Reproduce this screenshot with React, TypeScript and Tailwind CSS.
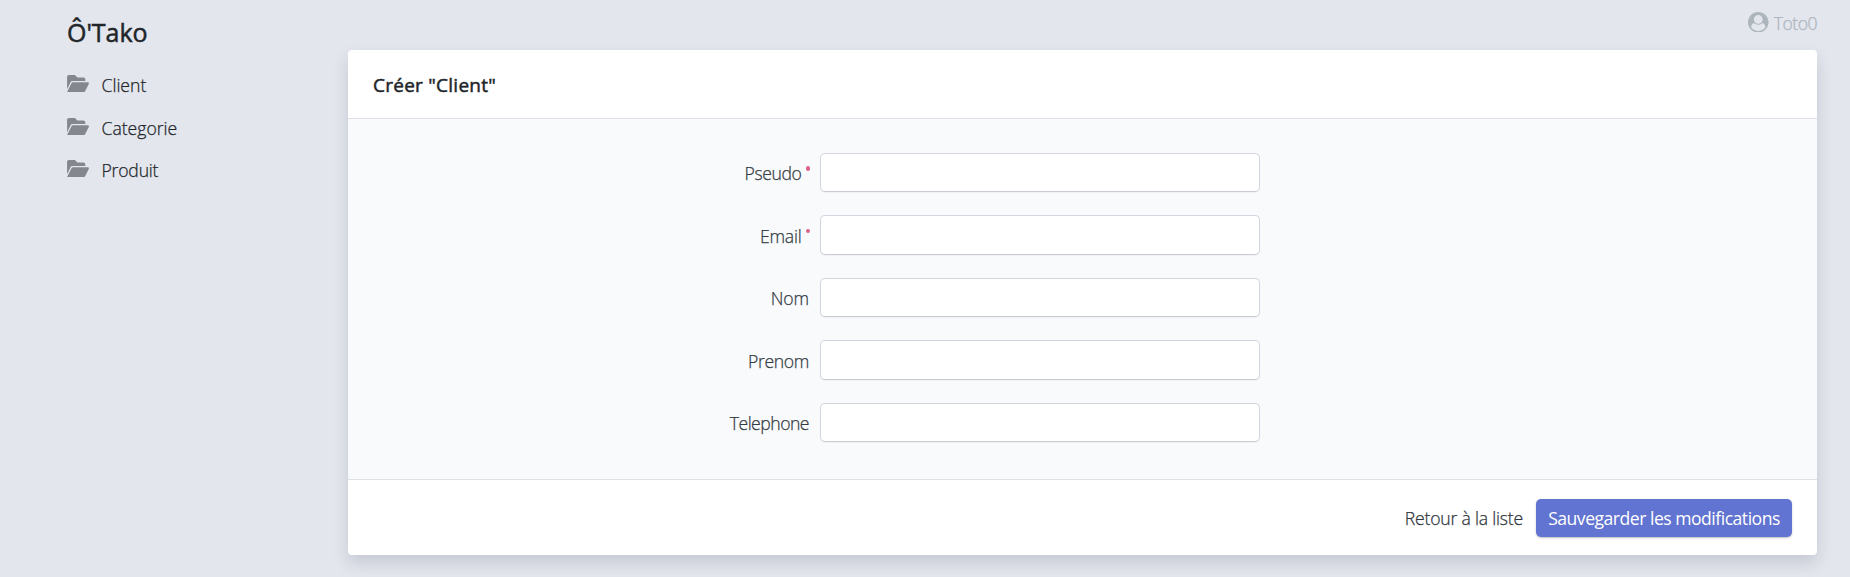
type Entry = { label: string; tracking: string };

const menu: Entry[] = [
  { label: "Client", tracking: "tracking-[0px]" },
  { label: "Categorie", tracking: "tracking-[0px]" },
  { label: "Produit", tracking: "tracking-[-0.2px]" },
];

const fields: (Entry & { required?: boolean })[] = [
  { label: "Pseudo", tracking: "tracking-[-0.4px]", required: true },
  { label: "Email", tracking: "tracking-[-0.2px]", required: true },
  { label: "Nom", tracking: "tracking-[-0.1px]" },
  { label: "Prenom", tracking: "tracking-[-0.35px]" },
  { label: "Telephone", tracking: "tracking-[-0.5px]" },
];

function FolderOpen() {
  return (
    <svg viewBox="0 32 576 448" fill="currentColor" className="mb-[3px] h-[17px] w-[22px] text-[#84888e]">
      <path d="M147.8 192H480V144C480 117.5 458.5 96 432 96h-160l-64-64h-160C21.49 32 0 53.49 0 80v328.4l90.54-181.1C101.4 205.6 123.4 192 147.8 192zM543.1 224H147.8C135.7 224 124.6 230.8 119.2 241.7L0 480h447.1c12.12 0 23.2-6.852 28.62-17.69l96-192C583.2 249 567.7 224 543.1 224z" />
    </svg>
  );
}

function UserCircle() {
  return (
    <svg viewBox="0 0 1792 1792" fill="currentColor" className="size-[20.5px]">
      <path d="M1523 1339q-22-155-87.5-257.5t-184.5-118.5q-67 74-159.5 115.5t-195.5 41.5-195.5-41.5-159.5-115.5q-119 16-184.5 118.5t-87.5 257.5q106 150 271 237.5t356 87.5 356-87.5 271-237.5zm-243-699q0-159-112.5-271.5t-271.5-112.5-271.5 112.5-112.5 271.5 112.5 271.5 271.5 112.5 271.5-112.5 112.5-271.5zm512 256q0 182-71 347.5t-190.5 286-285.5 191.5-349 71q-182 0-348-71t-286-191-191-286-71-348 71-348 191-286 286-191 348-71 348 71 286 191 191 286 71 348z" />
    </svg>
  );
}

export default function App() {
  return (
    <div className="flex h-[577px] w-full overflow-hidden bg-[#e3e6ed] font-['Open_Sans',sans-serif] text-[17.6px] font-light text-[#212529] [-webkit-text-stroke:0.25px]">
      <aside className="w-[348px] shrink-0 pl-[67px] pt-[15px]">
        <h1 className="text-[25px] font-normal leading-[34px] tracking-[-0.05px] [-webkit-text-stroke:0.5px]">Ô'Tako</h1>
        <nav className="mt-[15px]">
          {menu.map((m) => (
            <a key={m.label} className="flex h-[42.5px] items-center">
              <FolderOpen />
              <span className={`ml-[12.5px] ${m.tracking}`}>{m.label}</span>
            </a>
          ))}
        </nav>
      </aside>
      <main className="flex min-w-0 flex-1 flex-col pr-[33px]">
        <div className="flex h-[50px] items-center justify-end pb-[6px] text-[#adb5bd]">
          <UserCircle />
          <span className="ml-[5px] mt-[2px] tracking-[-0.5px]">Toto0</span>
        </div>
        <section className="flex h-[505px] flex-col rounded bg-white shadow-[0_8px_16px_rgba(33,43,60,0.15)]">
          <header className="flex h-[69px] items-center border-b border-[#dee2e6] pl-[25px]">
            <h2 className="mt-[2px] text-[19px] font-normal tracking-[0.25px] [-webkit-text-stroke:0.5px]">Créer "Client"</h2>
          </header>
          <form className="flex h-[361px] flex-col gap-[23.3px] border-b border-[#dee2e6] bg-[#f8fafc] pt-[34px]">
            {fields.map((f) => (
              <label key={f.label} className="flex h-[39.2px] items-center">
                <span className="flex w-[461px] justify-end pt-[1.5px] text-[#343a42]">
                  <span className={f.tracking}>{f.label}</span>
                  {f.required && <i className="ml-[4px] mr-[-1px] mt-[6px] size-[4.5px] rounded-full bg-[#dd6286]" />}
                </span>
                <input className="ml-[11px] h-full w-[440px] rounded-[5px] border border-[#d3d5df] border-b-[#c9cad2] bg-white px-3 shadow-[0_1px_1px_rgba(0,0,0,0.04)]" />
              </label>
            ))}
          </form>
          <footer className="flex h-[75px] items-center justify-end pr-[25px]">
            <a className="mt-px tracking-[-0.2px] text-[#2e343b]">Retour à la liste</a>
            <button className="ml-[13px] h-[38px] w-[256px] rounded-[5px] bg-[#6174d1] pt-px font-normal tracking-[-0.5px] text-white shadow-[0_1px_2px_rgba(0,0,0,0.25)] [-webkit-text-stroke:0px]">Sauvegarder les modifications</button>
          </footer>
        </section>
      </main>
    </div>
  );
}
